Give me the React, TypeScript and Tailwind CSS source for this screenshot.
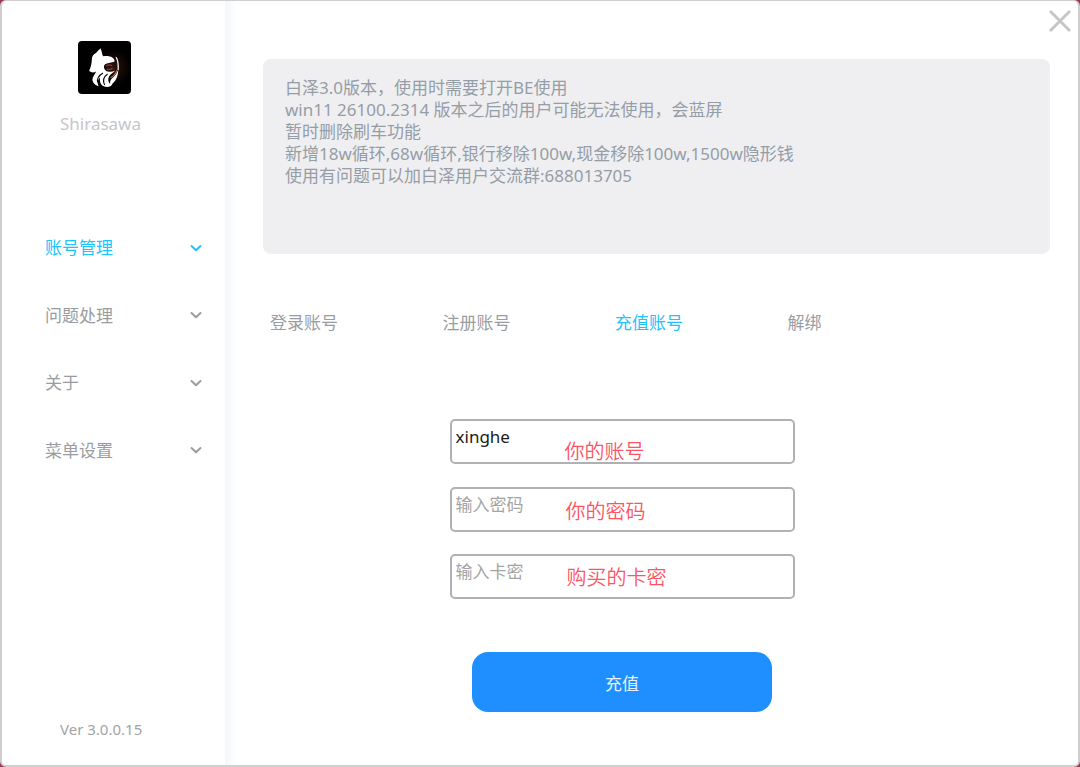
import React, { useState } from "react";

const notices = [
  "白泽3.0版本，使用时需要打开BE使用",
  "win11 26100.2314 版本之后的用户可能无法使用，会蓝屏",
  "暂时删除刷车功能",
  "新增18w循环,68w循环,银行移除100w,现金移除100w,1500w隐形钱",
  "使用有问题可以加白泽用户交流群:688013705",
];

const menu = ["账号管理", "问题处理", "关于", "菜单设置"];
const tabs = ["登录账号", "注册账号", "充值账号", "解绑"];

const fields = [
  { id: "account", label: "账号", value: "xinghe", placeholder: "输入账号", type: "text", note: "你的账号", place: "left-[115px] top-[18px]" },
  { id: "password", label: "密码", value: "", placeholder: "输入密码", type: "password", note: "你的密码", place: "left-[116px] top-[10px]" },
  { id: "card", label: "卡密", value: "", placeholder: "输入卡密", type: "text", note: "购买的卡密", place: "left-[117px] top-[9px]" },
];

function Logo() {
  return (
    <svg viewBox="0 0 53 53" className="size-[53px]" role="img" aria-label="Shirasawa">
      <defs>
        <radialGradient id="glow" cx="0.66" cy="0.5" r="0.34">
          <stop offset="0" stopColor="#2e1410" />
          <stop offset="1" stopColor="#000000" />
        </radialGradient>
      </defs>
      <rect width="53" height="53" rx="4" fill="url(#glow)" />
      <path
        d="M22.2 7.2C21.4 9.2 19.2 9.8 18 12C15.6 13 13.6 15.6 13.8 19C13.6 23 12.6 26.4 11.2 30C13.4 31.8 15.8 31.8 18.2 30.4C17 33 14.6 35.6 14.4 38.6C14.6 42 17.4 44.6 20.6 45.2C19 42 19.6 38.6 22 36.2C21.4 40.6 22.6 44.4 26.4 45.6C29.4 46.6 33.4 46 34.4 42.8C37.8 40 40.4 35 40.2 28.6C39 32.6 36.6 35.4 33.6 37.8C32.2 39.4 31.8 41 32.2 43C30.2 41.4 29.6 38.4 31 35.6C32.6 33 35.6 31.6 37 29.6C34 31.4 30 31.2 27.6 29.4C25.4 27.4 25.4 24.4 27.6 23C30.2 21.4 33.6 21.6 36.6 20.4C36.6 16.6 31.8 14.2 25.4 15.2C23.6 13.4 24.4 10 22.2 7.2Z"
        fill="#ffffff"
      />
      <path d="M38 16.2C40 19 40.4 24 40.2 29" stroke="#f4efed" strokeWidth="1.3" fill="none" />
      <path d="M28.2 25.2c1.6-1.4 3.8-1.4 6-.6M28.6 28c2 1 4.2.6 6-.8" stroke="#7c3a2f" strokeWidth="1.5" fill="none" />
      <path
        d="M25 32C21.6 34 18.8 37 19.6 41.5M29.6 33C26 35.5 24.6 39.6 26.6 44"
        stroke="#000000"
        strokeWidth="1.1"
        fill="none"
      />
      <path d="M32.6 36.8C35.6 35 37.8 32.5 38.8 29.4" stroke="#c66d59" strokeWidth="1.1" fill="none" />
    </svg>
  );
}

function Chevron() {
  return (
    <svg viewBox="0 0 12 8" className="h-2 w-3" fill="none" stroke="currentColor" strokeWidth="2" aria-hidden="true">
      <path d="M1.5 2L6 6.3L10.5 2" strokeLinecap="round" strokeLinejoin="round" />
    </svg>
  );
}

export default function App() {
  const [section, setSection] = useState(0);
  const [tab, setTab] = useState(2);

  return (
    <div className="flex min-h-screen bg-[#943c50] font-['Noto_Sans','Noto_Sans_CJK_SC',sans-serif] text-[17px]">
      <div className="relative flex flex-1 rounded-md border-2 border-t border-[#cfcfd1] bg-white">
        <aside className="flex w-[223px] shrink-0 flex-col pt-10">
          <div className="flex flex-col items-center pr-[18px]">
            <Logo />
            <p className="mt-[18px] pr-2 leading-6 text-[#c6c6c8]">Shirasawa</p>
          </div>
          <nav className="mt-[78px] grid h-[270px] grid-rows-4">
            {menu.map((name, i) => (
              <button
                key={name}
                type="button"
                onClick={() => setSection(i)}
                className={`flex items-center justify-between pr-[23px] pl-[43px] ${
                  section === i ? "text-[#21c3fb]" : "text-[#999da2]"
                }`}
              >
                <span>{name}</span>
                <Chevron />
              </button>
            ))}
          </nav>
          <p className="mt-auto mb-6 pl-[58px] text-[15px] leading-6 text-[#a3a3a5]">Ver 3.0.0.15</p>
        </aside>

        <div className="w-3 shrink-0 bg-linear-to-r from-[#f4f6f9] to-white" />

        <main className="flex-1 pt-[58px] pr-7 pb-10 pl-[26px]">
          <section className="h-[195px] rounded-lg bg-[#efeff1] px-[22px] pt-[18px] leading-[22px] text-[#959da6]">
            {notices.map((line) => (
              <p key={line}>{line}</p>
            ))}
          </section>

          <div role="tablist" className="mt-[57px] grid max-w-[697px] grid-cols-4 pl-[7px]">
            {tabs.map((name, i) => (
              <button
                key={name}
                type="button"
                role="tab"
                aria-selected={tab === i}
                onClick={() => setTab(i)}
                className={`text-left leading-6 ${tab === i ? "text-[#21c3fb]" : "text-[#999da2]"}`}
              >
                {name}
              </button>
            ))}
          </div>

          <form className="mt-[84px] flex flex-col items-center pr-[69px]" onSubmit={(e) => e.preventDefault()}>
            <div className="grid h-[180px] w-[345px] content-between">
              {fields.map((f) => (
                <div key={f.id} className="relative">
                  <input
                    id={f.id}
                    aria-label={f.label}
                    type={f.type}
                    defaultValue={f.value}
                    placeholder={f.placeholder}
                    className="block h-[45px] w-full rounded-[5px] border-2 border-[#b0b1b4] bg-white px-1 pb-[10px] text-[#1c1c1c] outline-none placeholder:text-[#a4a4a4]"
                  />
                  <label
                    htmlFor={f.id}
                    className={`absolute text-[20px] leading-[30px] font-[350] text-[#fb5464] ${f.place}`}
                  >
                    {f.note}
                  </label>
                </div>
              ))}
            </div>
            <button
              type="submit"
              className="mt-[53px] h-[60px] w-[300px] rounded-2xl bg-[#1f8fff] pt-1 text-[#e4f1ff]"
            >
              充值
            </button>
          </form>
        </main>

        <button type="button" aria-label="关闭" className="absolute top-2 right-1.5 text-[#c6c6c6]">
          <svg viewBox="0 0 24 24" className="size-6" fill="none" stroke="currentColor" strokeWidth="3" aria-hidden="true">
            <path d="M2 2L22 22M22 2L2 22" />
          </svg>
        </button>
      </div>
    </div>
  );
}
